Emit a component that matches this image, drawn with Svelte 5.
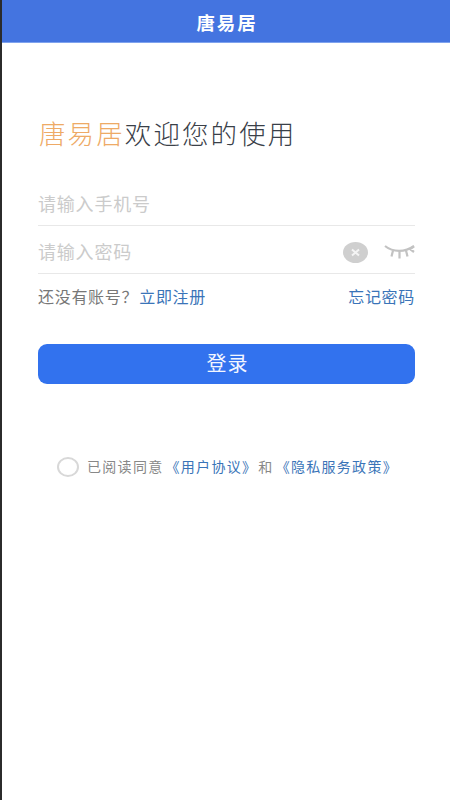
<script>
  // Login page with app title, two inputs and the agreement line
  let agreed = false;
</script>

<div class="page">
  <div class="topbar">唐易居</div>

  <div class="content">
    <h1 class="welcome"><span class="brand">唐易居</span>欢迎您的使用</h1>

    <div class="field first">
      <span class="placeholder">请输入手机号</span>
    </div>
    <div class="field">
      <span class="placeholder">请输入密码</span>
      <div class="field-icons">
        <svg class="clear" width="25" height="21" viewBox="0 0 25 21">
          <ellipse cx="12.5" cy="10.5" rx="12.5" ry="10.5" fill="#cfcfcf" />
          <path d="M9 7.5l7 6M16 7.5l-7 6" stroke="#f4f4f4" stroke-width="2" fill="none" />
        </svg>
        <svg class="eye" width="31" height="16" viewBox="0 0 31 16">
          <path d="M1 2c8 6.500 20 6.500 29 0" stroke="#c2c2c2" stroke-width="2.200" fill="none" />
          <path d="M9 6.500l-1.500 6M15.500 7.500v7M22 6.500l1.500 6M30 2.500l-4 2.500 4 3" stroke="#c2c2c2" stroke-width="2.200" fill="none" />
        </svg>
      </div>
    </div>

    <div class="links">
      <span class="hint">还没有账号？<span class="link register">立即注册</span></span>
      <span class="link">忘记密码</span>
    </div>

    <button class="login">登录</button>

    <div class="agree">
      <button class="radio" class:on={agreed} on:click={() => (agreed = !agreed)} aria-label="同意"></button>
      <span class="agree-text">已阅读同意<span class="link2 first-link">《用户协议》</span><span class="and">和</span><span class="link2">《隐私服务政策》</span></span>
    </div>
  </div>
</div>

<style>
  :global(body) {
    margin: 0;
    background: #fff;
  }
  .page {
    height: 800px;
    border-left: 2px solid #2b2b2b;
    box-sizing: border-box;
    background: #fff;
    font-family: "Noto Sans CJK SC", "Liberation Sans", sans-serif;
    overflow: hidden;
  }
  .topbar {
    height: 43px;
    line-height: 44px;
    background: #4474e0;
    border-bottom: 1px solid #7fa3ee;
    box-sizing: border-box;
    color: #fff;
    text-align: center;
    font-size: 18.500px;
    font-weight: bold;
    letter-spacing: 1.800px;
    padding-left: 2px;
  }
  .content {
    padding: 0 35px 0 36px;
  }
  .welcome {
    margin: 73px 0 0;
    height: 34px;
    line-height: 34px;
    font-size: 26.500px;
    font-weight: 300;
    letter-spacing: 2.100px;
    color: #3a4048;
    padding-left: 1px;
  }
  .brand {
    color: #eeaa66;
  }
  .field {
    height: 48px;
    padding-top: 5px;
    border-bottom: 1px solid #e8e8e8;
    display: flex;
    align-items: center;
    justify-content: space-between;
    box-sizing: border-box;
  }
  .field.first {
    margin-top: 28px;
  }
  .placeholder {
    font-size: 18px;
    line-height: 24px;
    margin-top: -3px;
    letter-spacing: 0.800px;
    color: #cbcbcb;
  }
  .field-icons {
    display: flex;
    align-items: center;
    gap: 16px;
  }
  .field-icons svg {
    display: block;
  }
  .links {
    height: 46px;
    padding-bottom: 2px;
    box-sizing: border-box;
    display: flex;
    align-items: center;
    justify-content: space-between;
    font-size: 16px;
    letter-spacing: 0.700px;
    color: #777;
  }
  .link {
    color: #3a74b8;
  }
  .register {
    margin-left: 1px;
  }
  .login {
    display: block;
    width: 100%;
    height: 40px;
    margin-top: 24px;
    padding: 0 0 3px 2px;
    border: none;
    border-radius: 9px;
    background: #3272ee;
    color: #f2f6ff;
    font-family: inherit;
    font-size: 20px;
    letter-spacing: 1px;
  }
  .agree {
    margin-top: 73px;
    padding-left: 19px;
    display: flex;
    align-items: center;
    gap: 8px;
  }
  .radio {
    width: 22px;
    height: 20px;
    padding: 0;
    border: 2px solid #d8d8d8;
    border-radius: 50%;
    background: #fff;
    box-sizing: border-box;
  }
  .radio.on {
    background: #3272ee;
  }
  .agree-text {
    font-size: 14px;
    line-height: 20px;
    margin-top: -2px;
    letter-spacing: 1.300px;
    color: #888;
    white-space: nowrap;
  }
  .link2 {
    color: #3a74b8;
  }
  .first-link {
    margin-left: 2px;
  }
  .and {
    margin: 0 2px 0 1px;
  }
</style>
